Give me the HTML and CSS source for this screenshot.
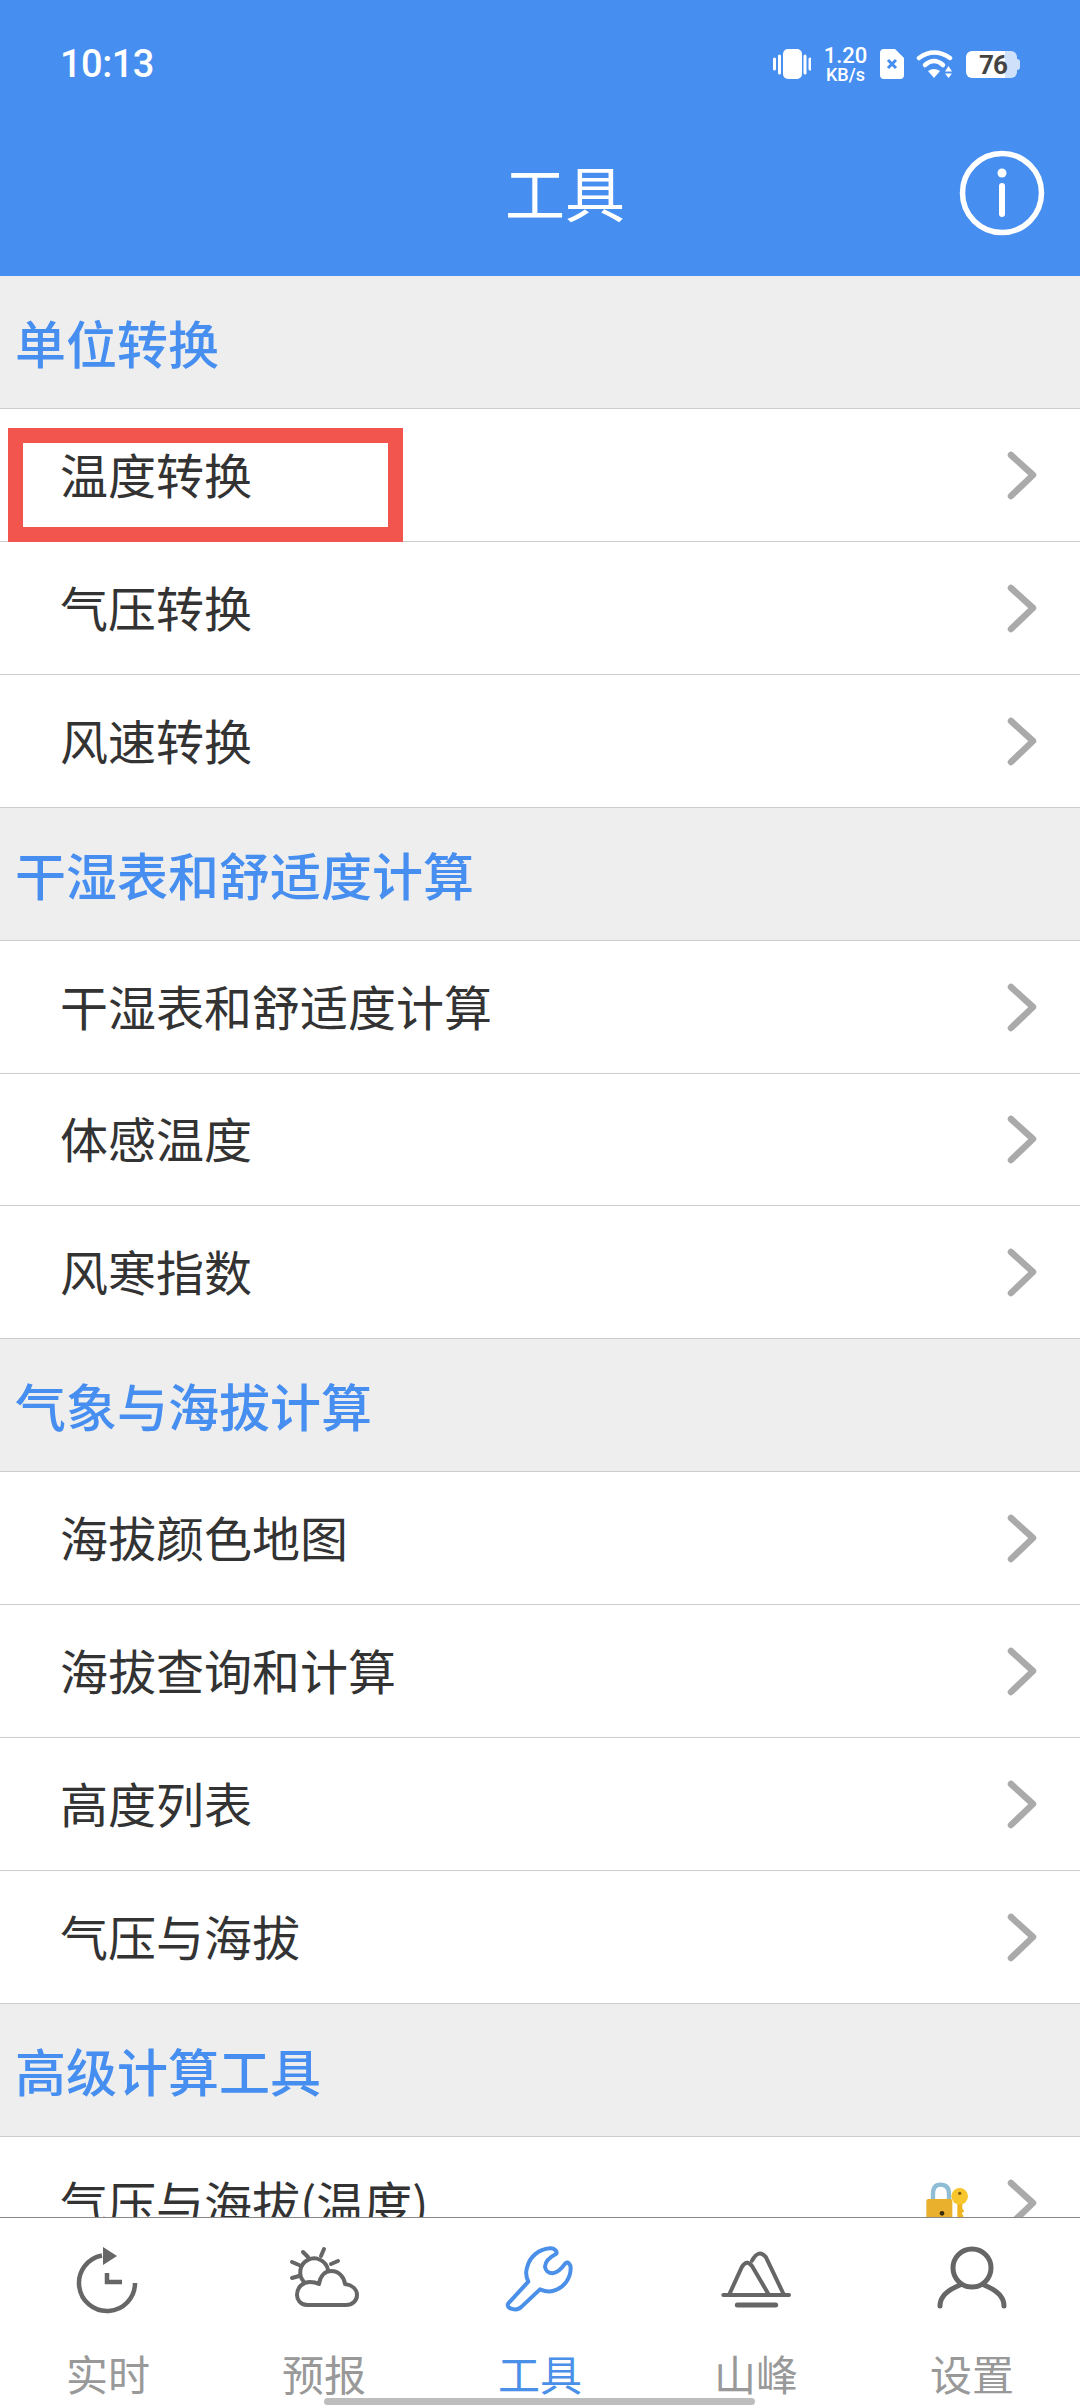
FILE: index.html
```html
<!DOCTYPE html>
<html lang="zh-CN">
<head>
  <meta charset="UTF-8">
  <title>工具</title>
  <link rel="stylesheet" href="styles.css">
</head>
<body>

<svg class="sprite" width="0" height="0">
  <symbol id="chevron" viewBox="0 0 30 50">
    <path d="M4 5 L26 25 L4 46" fill="none" stroke="#aaaaaa" stroke-width="6.500" stroke-linecap="round" stroke-linejoin="round"/>
  </symbol>
</svg>

<div class="page">

  <!-- Header -->
  <div class="header">
    <div class="status">
      <span class="time">10:13</span>
      <div class="status-icons">
        <svg width="38" height="32" viewBox="0 0 38 32">
          <rect x="10" y="1" width="19" height="30" rx="5" fill="#fff"/>
          <path d="M1.5 11 V21 M6.5 8 V25 M32 8 V25 M37 11 V21" stroke="#fff" stroke-width="3" stroke-linecap="round"/>
        </svg>
        <div class="speed"><span class="speed-num">1.20</span><span class="speed-unit">KB/s</span></div>
        <svg width="24" height="30" viewBox="0 0 24 30">
          <path d="M4 0 H15 L24 9 V26 Q24 30 20 30 H4 Q0 30 0 26 V4 Q0 0 4 0 Z" fill="#fff"/>
          <path d="M8 11 L16 19 M16 11 L8 19" stroke="#468ef0" stroke-width="3"/>
        </svg>
        <svg width="38" height="32" viewBox="0 0 38 32">
          <path d="M3 10 Q18 -1 34 10" fill="none" stroke="#fff" stroke-width="4.500" stroke-linecap="round"/>
          <path d="M9 17 Q18 9 27 17" fill="none" stroke="#fff" stroke-width="4.500" stroke-linecap="round"/>
          <path d="M12 23 Q18 19 24 23 L18 30 Z" fill="#fff"/>
          <path d="M32.5 18 L36 23.500 H29 Z M29 25.500 H36 L32.500 30 Z" fill="#fff"/>
        </svg>
        <div class="battery">76</div>
      </div>
    </div>
    <div class="titlebar">
      <div class="title">工具</div>
      <svg class="info" width="88" height="88" viewBox="0 0 88 88">
        <circle cx="44" cy="44" r="39.500" fill="none" stroke="#fff" stroke-width="5.500"/>
        <circle cx="44" cy="24" r="4.500" fill="#fff"/>
        <path d="M44 37 V65" stroke="#fff" stroke-width="6" stroke-linecap="round"/>
      </svg>
    </div>
  </div>

  <!-- Tool list -->
  <div class="list">
    <div class="section">单位转换</div>
    <div class="row">温度转换<svg class="chevron"><use href="#chevron"/></svg><div class="mark"></div></div>
    <div class="row">气压转换<svg class="chevron"><use href="#chevron"/></svg></div>
    <div class="row">风速转换<svg class="chevron"><use href="#chevron"/></svg></div>

    <div class="section">干湿表和舒适度计算</div>
    <div class="row">干湿表和舒适度计算<svg class="chevron"><use href="#chevron"/></svg></div>
    <div class="row">体感温度<svg class="chevron"><use href="#chevron"/></svg></div>
    <div class="row">风寒指数<svg class="chevron"><use href="#chevron"/></svg></div>

    <div class="section">气象与海拔计算</div>
    <div class="row">海拔颜色地图<svg class="chevron"><use href="#chevron"/></svg></div>
    <div class="row">海拔查询和计算<svg class="chevron"><use href="#chevron"/></svg></div>
    <div class="row">高度列表<svg class="chevron"><use href="#chevron"/></svg></div>
    <div class="row">气压与海拔<svg class="chevron"><use href="#chevron"/></svg></div>

    <div class="section">高级计算工具</div>
    <div class="row">气压与海拔(温度)
      <svg class="lock" width="50" height="70" viewBox="40 0 150 210">
        <path d="M70 100 V78 Q70 50 92 50 Q118 50 118 78 V100" fill="none" stroke="#8fbdd6" stroke-width="13"/>
        <rect x="50" y="93" width="78" height="70" rx="6" fill="#e8b02c"/>
        <circle cx="97" cy="136" r="7" fill="#3b2c10"/>
        <path d="M143 100 H158 V122 L164 130 L156 136 L162 145 L150 155 L143 148 Z" fill="#f0b41e"/>
        <circle cx="150" cy="85" r="25" fill="#f7c52e"/>
        <circle cx="150" cy="76" r="5" fill="#7a5a10"/>
      </svg>
      <svg class="chevron"><use href="#chevron"/></svg>
    </div>
  </div>

  <!-- Bottom tabs -->
  <div class="tabbar">
    <div class="tab">
      <svg width="100" height="80" viewBox="0 0 100 80">
        <path d="M77 43 A28 28 0 1 1 44 15.500" fill="none" stroke="#666" stroke-width="4.500"/>
        <path d="M45 7 L59 16 L45 25 Z" fill="#666"/>
        <path d="M49 33 V42 H64" fill="none" stroke="#666" stroke-width="4.500"/>
      </svg>
      <span class="tab-label">实时</span>
    </div>
    <div class="tab">
      <svg width="100" height="80" viewBox="0 0 100 80">
        <g fill="none" stroke="#666" stroke-width="4" stroke-linecap="round">
          <path d="M50 9 L47 16 M29 12 L34 17 M64 21 L57 24 M18 22 L25 25 M18 38 L25 36"/>
          <path d="M30 42 A14 14 0 1 1 54 30"/>
          <path d="M33 65 C26 65 23 59 23 55 C23 47 29 42 36 42 C39 42 43 43 45 44 C46 36 51 31 57 31 C65 31 70 37 71 44 C78 45 83 49 83 55 C83 61 78 65 72 65 Z" stroke-linejoin="round"/>
        </g>
      </svg>
      <span class="tab-label">预报</span>
    </div>
    <div class="tab active">
      <svg width="100" height="80" viewBox="0 0 300 240">
        <path d="M55 190 L115 125 C108 110 106 95 112 80 C120 50 145 28 180 25 C192 24 204 34 198 42 C182 50 166 62 165 80 C166 92 176 100 188 100 C204 98 216 84 226 70 C234 64 242 72 242 85 C242 115 222 145 188 153 C175 156 162 153 150 148 L95 200 C80 216 45 205 55 190 Z" fill="none" stroke="#4a8fe8" stroke-width="12" stroke-linejoin="round"/>
      </svg>
      <span class="tab-label">工具</span>
    </div>
    <div class="tab">
      <svg width="100" height="80" viewBox="-14 0 300 240">
        <g fill="none" stroke="#666" stroke-linecap="round" stroke-linejoin="round">
          <path d="M38 165 H235" stroke-width="12"/>
          <path d="M80 195 H195" stroke-width="15"/>
          <path d="M55 165 L93 82 Q108 56 124 78 L175 165" stroke-width="12"/>
          <path d="M124 62 Q145 25 166 52 L220 165" stroke-width="12"/>
        </g>
      </svg>
      <span class="tab-label">山峰</span>
    </div>
    <div class="tab">
      <svg width="100" height="80" viewBox="0 0 100 80">
        <circle cx="50" cy="28" r="19" fill="none" stroke="#666" stroke-width="5"/>
        <path d="M18 66 C18 55 28 49 38 45 M82 66 C82 55 72 49 62 45" fill="none" stroke="#666" stroke-width="5" stroke-linecap="round"/>
      </svg>
      <span class="tab-label">设置</span>
    </div>
  </div>

  <div class="home-bar"></div>
</div>

</body>
</html>
```

FILE: styles.css
```css
html, body {
  margin: 0;
  padding: 0;
}
body {
  font-family: "Noto Sans CJK SC", "Noto Sans", sans-serif;
  background: white;
}
.sprite {
  position: absolute;
}
.page {
  position: relative;
  width: 1080px;
  height: 2408px;
  display: flex;
  flex-direction: column;
  overflow: hidden;
}

/* header */
.header {
  height: 276px;
  flex: none;
  background: #468ef0;
  color: white;
}
.status {
  height: 48px;
  padding: 40px 60px 0;
  display: flex;
  align-items: center;
  justify-content: space-between;
}
.time {
  font-family: Roboto, sans-serif;
  font-size: 38px;
  font-weight: 500;
  letter-spacing: -0.5px;
}
.status-icons {
  display: flex;
  align-items: center;
  gap: 12px;
}
.speed {
  width: 45px;
  display: flex;
  flex-direction: column;
  align-items: center;
  font-family: Roboto, sans-serif;
  font-weight: 500;
}
.speed-num {
  font-size: 22px;
  line-height: 20px;
}
.speed-unit {
  font-size: 18px;
  line-height: 17px;
}
.battery {
  position: relative;
  width: 51px;
  height: 27px;
  margin-right: 3px;
  box-sizing: border-box;
  padding-left: 13px;
  border-radius: 6px;
  background: linear-gradient(to right, #fff 39px, #cfe0fb 39px);
  color: #444;
  font-family: Roboto, sans-serif;
  font-size: 26px;
  font-weight: 700;
  line-height: 28px;
  letter-spacing: -1px;
}
.battery::after {
  content: "";
  position: absolute;
  right: -3px;
  top: 8px;
  width: 3px;
  height: 11px;
  border-radius: 0 3px 3px 0;
  background: #cfe0fb;
}
.titlebar {
  height: 188px;
  box-sizing: border-box;
  padding: 22px 34px 0 0;
  display: flex;
  align-items: center;
}
.title {
  flex: 1;
  padding: 0 0 6px 172px;
  text-align: center;
  font-size: 60px;
}

/* list */
.list {
  flex: 1;
  min-height: 0;
  overflow: hidden;
}
.section, .row {
  height: 132.93px;
  box-sizing: border-box;
  display: flex;
  align-items: center;
  border-bottom: 1px solid #cccccc;
}
.section {
  padding-left: 15px;
  background: #eeeeee;
  color: #468ef0;
  font-size: 51px;
  font-weight: 500;
}
.row {
  position: relative;
  padding: 0 43px 4px 60px;
  background: white;
  color: #333333;
  font-size: 48px;
}
.chevron {
  width: 30px;
  height: 50px;
  margin-left: auto;
  margin-top: 4px;
}
.lock {
  margin-left: auto;
  margin-right: 34px;
  margin-top: 4px;
}
.lock + .chevron {
  margin-left: 0;
}
.mark {
  position: absolute;
  left: 8px;
  top: 19px;
  width: 395px;
  height: 114px;
  box-sizing: border-box;
  border: 15px solid #f2554d;
}

/* tabs */
.tabbar {
  height: 191px;
  flex: none;
  box-sizing: border-box;
  padding-top: 22px;
  display: flex;
  background: white;
  border-top: 1px solid #888888;
}
.tab {
  flex: 1;
  display: flex;
  flex-direction: column;
  align-items: center;
  gap: 28px;
  color: #999999;
}
.tab.active {
  color: #4a8fe8;
}
.tab-label {
  font-size: 42px;
  line-height: 50px;
}
.home-bar {
  position: absolute;
  left: 324px;
  top: 2398px;
  width: 431px;
  height: 7px;
  border-radius: 4px;
  background: #bdbdbd;
}
```
